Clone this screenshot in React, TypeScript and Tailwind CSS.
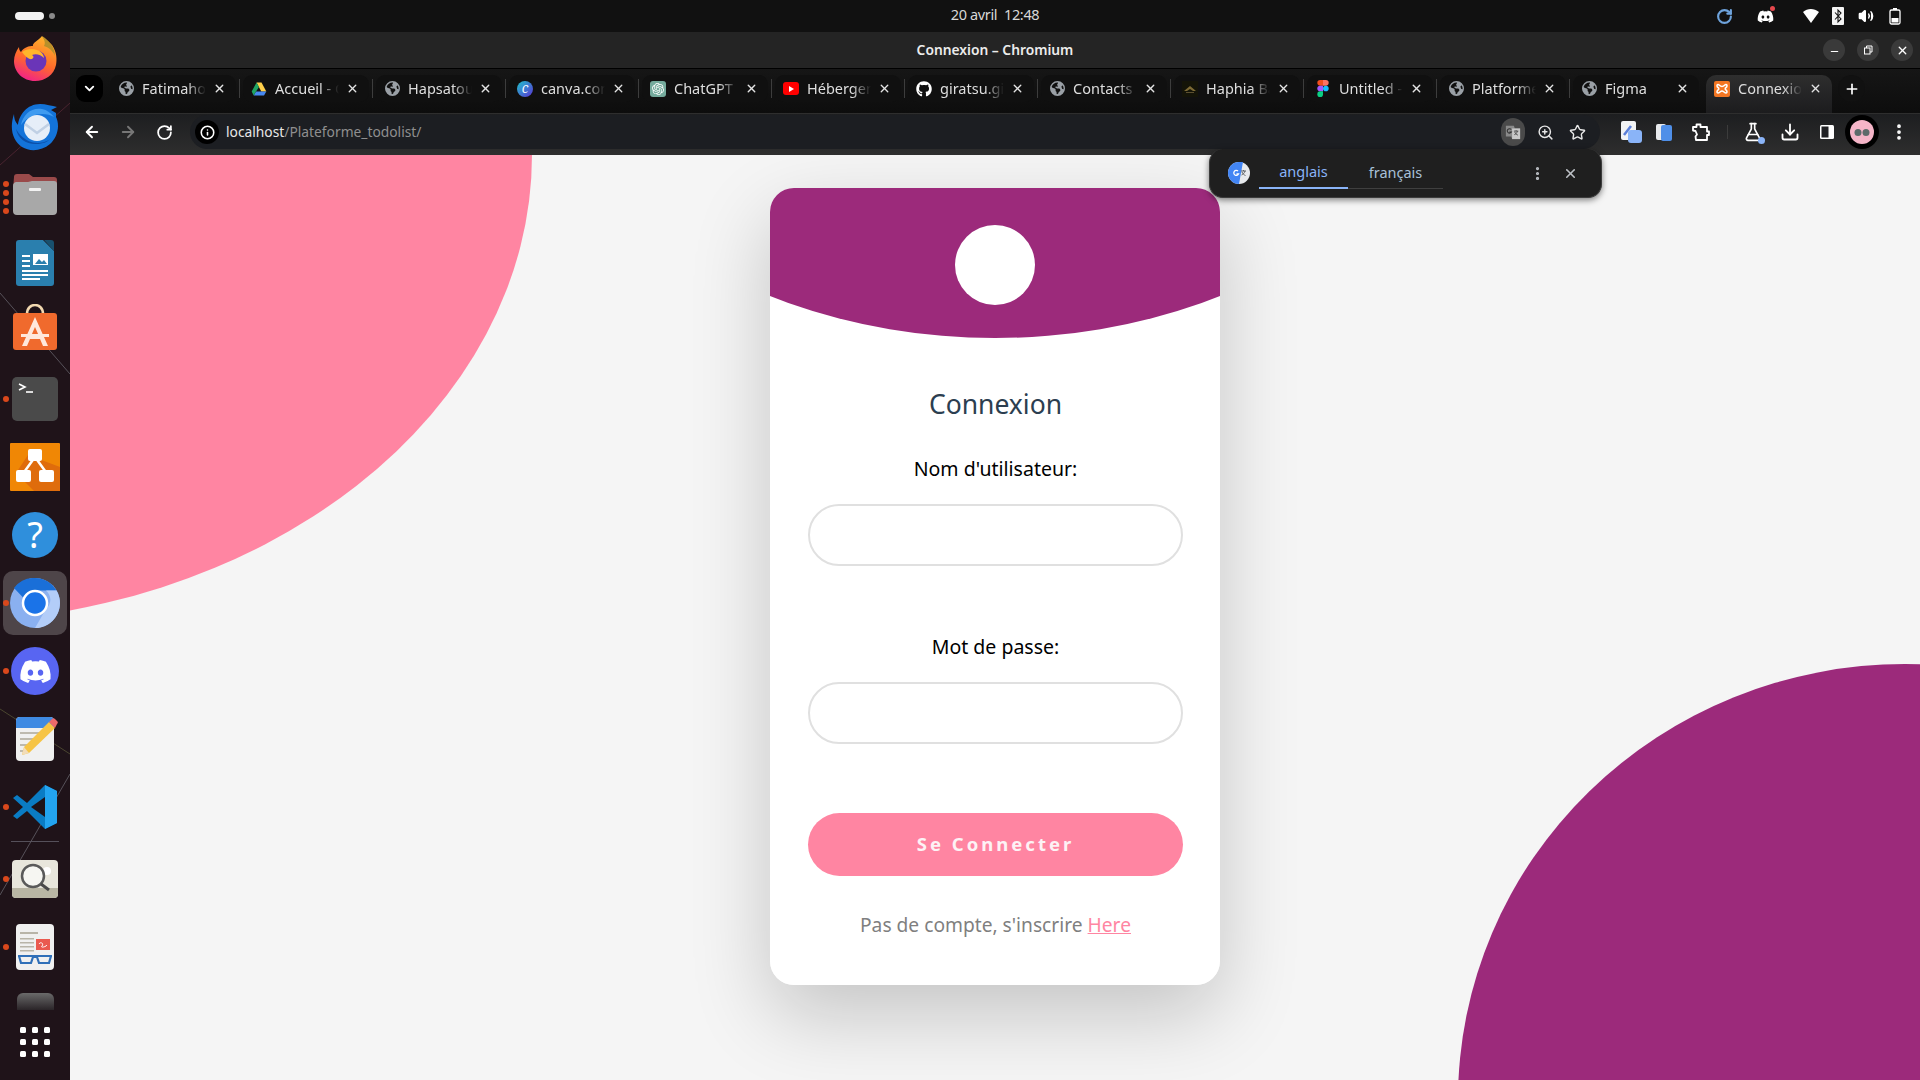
import type { ReactNode } from "react";
import {
  ArrowLeft,
  ArrowRight,
  ChevronDown,
  Download,
  EllipsisVertical,
  FlaskConical,
  Info,
  Minus,
  Plus,
  RotateCw,
  Star,
  Volume2,
  X,
  ZoomIn,
} from "lucide-react";
import { FaDiscord, FaEarthAmericas, FaGithub } from "react-icons/fa6";
import { SiOpenai } from "react-icons/si";

const Globe = () => <FaEarthAmericas size={15} className="text-[#9aa0a6]" />;

const DriveIcon = () => (
  <svg width="16" height="16" viewBox="0 0 16 16">
    <path d="M5.500 1.500h5l4.800 9h-5z" fill="#ffd04b" />
    <path d="M5 10.500h10.300L13 14.500H2.700z" fill="#4688f1" />
    <path d="M5.500 1.500 8 6 5 10.500 2.700 14.500 0.700 10.500z" fill="#1fa463" />
  </svg>
);

const CanvaIcon = () => (
  <span className="flex size-4 items-center justify-center rounded-full bg-[linear-gradient(135deg,#20c4cb,#5a32d6)] font-serif text-[12px] italic leading-none text-white">
    C
  </span>
);

const ChatGptIcon = () => (
  <span className="flex size-4 items-center justify-center rounded-[3px] bg-[#74aa9c]">
    <SiOpenai size={12} className="text-white" />
  </span>
);

const YoutubeIcon = () => (
  <span className="flex h-[13px] w-4 items-center justify-center rounded-[3px] bg-[#ff0000]">
    <span className="ml-px border-y-[3px] border-l-[5px] border-y-transparent border-l-white" />
  </span>
);

const HaphiaIcon = () => (
  <svg width="16" height="16" viewBox="0 0 16 16">
    <rect width="16" height="16" fill="#141408" />
    <path d="M2 10 8 5l6 5-3 0-3-2-3 2z" fill="#7d6a35" />
    <rect x="4" y="11" width="8" height="1" fill="#5c5030" />
  </svg>
);

const FigmaIcon = () => (
  <svg width="12" height="17" viewBox="0 0 12 18">
    <path d="M6 0H3a3 3 0 0 0 0 6h3z" fill="#f24e1e" />
    <path d="M6 0h3a3 3 0 0 1 0 6H6z" fill="#ff7262" />
    <path d="M6 6H3a3 3 0 0 0 0 6h3z" fill="#a259ff" />
    <circle cx="9" cy="9" r="3" fill="#1abcfe" />
    <path d="M6 12H3a3 3 0 1 0 3 3z" fill="#0acf83" />
  </svg>
);

const XamppIcon = () => (
  <svg width="16" height="16" viewBox="0 0 16 16">
    <rect width="16" height="16" rx="2" fill="#f37623" />
    <path
      d="M4 3.500c1.500 0 1.500 2 4 2s2.500-2 4-2 1 2.500 0 3-1 2 0 2.500 1.500 3 0 3-2.500-2-4-2-2.500 2-4 2-1-2.500 0-3 1-2 0-2.500-1.500-3 0-3z"
      fill="none"
      stroke="#fff"
      strokeWidth="1.600"
    />
  </svg>
);

type TabItem = { title: string; icon: ReactNode; active?: boolean };

const tabs: TabItem[] = [
  { title: "Fatimahou", icon: <Globe /> },
  { title: "Accueil - Google", icon: <DriveIcon /> },
  { title: "Hapsatou", icon: <Globe /> },
  { title: "canva.com", icon: <CanvaIcon /> },
  { title: "ChatGPT", icon: <ChatGptIcon /> },
  { title: "Hébergement", icon: <YoutubeIcon /> },
  { title: "giratsu.github", icon: <FaGithub size={16} className="text-white" /> },
  { title: "Contacts", icon: <Globe /> },
  { title: "Haphia Bah", icon: <HaphiaIcon /> },
  { title: "Untitled - Figma", icon: <FigmaIcon /> },
  { title: "Platforme", icon: <Globe /> },
  { title: "Figma", icon: <Globe /> },
  { title: "Connexion", icon: <XamppIcon />, active: true },
];

function Tab({ tab }: { tab: TabItem }) {
  return (
    <div
      className={`flex w-[126px] shrink-0 items-center pl-2 pr-[10px] ${
        tab.active
          ? "h-[38px] self-start rounded-t-[10px] bg-[linear-gradient(#2e2e2e,#1c1c1e)] pb-[11px]"
          : "h-[27px] rounded-[9px] bg-[#101010]"
      }`}
    >
      <span className="flex w-4 shrink-0 items-center justify-center">{tab.icon}</span>
      <span className="ml-2 -mt-[2px] w-[64px] shrink-0 overflow-hidden whitespace-nowrap text-[14.500px] leading-[20px] text-[#dedede] [mask-image:linear-gradient(to_right,black_70%,transparent)]">
        {tab.title}
      </span>
      <X size={13} strokeWidth={2.500} className="ml-auto shrink-0 text-[#e4e4e4]" />
    </div>
  );
}

function TabStrip() {
  return (
    <div className="flex h-[45px] shrink-0 border-t border-t-black bg-[linear-gradient(#161616,#0d0d0d)] pl-[6px] pt-[6px]">
      <div className="mr-[7px] flex h-[27px] w-[27px] shrink-0 items-center justify-center rounded-[9px] bg-black">
        <ChevronDown size={15} strokeWidth={3} className="text-white" />
      </div>
      {tabs.map((tab, i) => (
        <div key={tab.title} className="flex h-[27px] items-start">
          <Tab tab={tab} />
          {i < tabs.length - 1 && (
            <span
              className={`mx-[3px] mt-[4px] h-[19px] w-px shrink-0 ${
                i === tabs.length - 2 ? "bg-transparent" : "bg-[#3d3d3d]"
              }`}
            />
          )}
        </div>
      ))}
      <div className="ml-[6px] flex h-[27px] w-[27px] shrink-0 items-center justify-center rounded-full bg-[#111111]">
        <Plus size={16} strokeWidth={2.500} className="text-white" />
      </div>
    </div>
  );
}

function TranslateIcon({ size = 16 }: { size?: number }) {
  return (
    <svg width={size} height={size} viewBox="0 0 18 18">
      <path d="M1 2h9l1 3h6v12H8l-1-3H1z" fill="#8a8a8a" />
      <path d="M8 5h9v12H8z" fill="#c8c8c8" />
      <path d="M10 8h5M12.500 7v1M14 8c-.500 2-2 3.500-3.500 4M11 9c.500 1.500 2 3 3.500 3.500" stroke="#444" strokeWidth="1" fill="none" />
      <path d="M7 6.200A2.500 2.500 0 1 0 7.200 9H5" stroke="#333" strokeWidth="1.200" fill="none" />
    </svg>
  );
}

function ToolbarExtensions() {
  return (
    <div className="flex shrink-0 items-center">
      <svg width="24" height="24" viewBox="0 0 24 24" className="ml-[19px]">
        <rect x="2" y="1" width="15" height="19" rx="2" fill="#f1f3f4" />
        <path d="m5 15 7-9" stroke="#5b7fd8" strokeWidth="2.500" />
        <rect x="9" y="10" width="14" height="13" rx="3" fill="#8ab4f8" />
      </svg>
      <svg width="18" height="20" viewBox="0 0 18 20" className="ml-[12px]">
        <rect x="1" y="2" width="10" height="16" rx="2" fill="#e8eaed" />
        <rect x="6" y="3" width="11" height="16" rx="2" fill="#4f8fe8" />
      </svg>
      <svg width="20" height="20" viewBox="0 0 20 20" className="ml-[17px]" fill="none" stroke="#fff" strokeWidth="1.800">
        <path d="M3 5h3.500V2.500h4V5H17v4.500h2v3.500h-2V18H6l-.500-3.500L7 12.500 5.500 9 3 8.500z" strokeLinejoin="round" />
      </svg>
      <span className="ml-[17px] h-[14px] w-px bg-[#3c3c3c]" />
      <span className="relative ml-[15px] flex">
        <FlaskConical size={20} className="text-white" />
        <span className="absolute -bottom-[2px] -right-[2px] size-[7px] rounded-full bg-[#8ab4f8]" />
      </span>
      <Download size={20} strokeWidth={2.200} className="ml-[17px] text-white" />
      <svg width="16" height="16" viewBox="0 0 16 16" className="ml-[19px]">
        <rect x="1" y="1" width="14" height="14" rx="1.500" fill="#fff" />
        <rect x="2.500" y="2.500" width="7" height="11" fill="#202124" />
      </svg>
      <span className="ml-[10px] flex size-[34px] items-center justify-center rounded-full bg-black">
        <svg width="24" height="24" viewBox="0 0 24 24">
          <circle cx="12" cy="12" r="12" fill="#f5b5c8" />
          <circle cx="8" cy="12.500" r="3.500" fill="#5d6a6a" />
          <circle cx="16" cy="12.500" r="3.500" fill="#5d6a6a" />
        </svg>
      </span>
      <EllipsisVertical size={20} strokeWidth={2.500} className="ml-[10px] text-white" />
    </div>
  );
}

function Toolbar() {
  return (
    <div className="flex h-[42px] shrink-0 items-center border-t border-t-[#2e2e2e] bg-[linear-gradient(#1d1e20,#2e2e2e)] pb-[5px] pl-[13px]">
      <ArrowLeft size={18} strokeWidth={2.500} className="shrink-0 text-white" />
      <ArrowRight size={18} strokeWidth={2.500} className="ml-[18px] shrink-0 text-[#777777]" />
      <RotateCw size={17} strokeWidth={2.500} className="ml-[19px] shrink-0 text-white" />
      <div className="ml-[17px] flex h-[34px] w-[1410px] shrink-0 items-center rounded-full bg-[#1c1e22] pl-[5px] pr-[14px]">
        <span className="flex size-6 items-center justify-center rounded-full bg-black">
          <Info size={15} strokeWidth={2.500} className="text-white" />
        </span>
        <span className="ml-[7px] text-[13.800px] text-[#e8e8e8]">
          localhost<span className="text-[#8f8f8f]">/Plateforme_todolist/</span>
        </span>
        <span className="ml-auto flex h-[28px] w-[24px] items-center justify-center rounded-full bg-[#4a4a4a]">
          <TranslateIcon />
        </span>
        <ZoomIn size={17} strokeWidth={2} className="ml-[12px] text-[#e8e8e8]" />
        <Star size={17} strokeWidth={2} className="ml-[15px] text-[#e8e8e8]" />
      </div>
      <ToolbarExtensions />
    </div>
  );
}

function TopBar() {
  return (
    <div className="relative flex h-8 shrink-0 items-center justify-center bg-[#111111] pb-[2px] pl-[70px]">
      <div className="absolute left-[15px] top-[12px] flex items-center gap-[5px]">
        <span className="h-2 w-[29px] rounded-full bg-[#f2f2f2]" />
        <span className="size-[6px] rounded-full bg-[#8a8a8a]" />
      </div>
      <span className="text-[14.500px] tracking-tight text-[#d8d8d8]">20 avril&nbsp;&nbsp;12:48</span>
      <div className="absolute right-[19px] top-0 flex h-8 items-center">
        <RotateCw size={17} strokeWidth={3} className="text-[#6ea3dc]" />
        <span className="relative ml-[24px] flex">
          <FaDiscord size={17} className="text-white" />
          <span className="absolute -right-px -top-[2px] size-[5px] rounded-full bg-[#e5484d]" />
        </span>
        <svg width="16" height="14" viewBox="0 0 16 14" className="ml-[29px]">
          <path d="M0 3c4.500-4 11-4 16 0L8 14z" fill="#fff" />
        </svg>
        <svg width="12" height="18" viewBox="0 0 12 18" className="ml-[13px]">
          <rect width="12" height="18" rx="1" fill="#f4f4f4" />
          <path d="m3 5.500 6 6.500-3 3V3l3 3-6 6.500" fill="none" stroke="#111" strokeWidth="1.100" />
        </svg>
        <Volume2 size={16} className="ml-[14px] text-white" fill="#fff" />
        <svg width="12" height="17" viewBox="0 0 12 17" className="ml-[15px]">
          <rect x="4" width="4" height="2" fill="#fff" />
          <rect x="1" y="2" width="10" height="14" rx="1.500" fill="none" stroke="#fff" strokeWidth="1.300" />
          <rect x="2.500" y="10" width="7" height="4.500" fill="#fff" />
        </svg>
      </div>
    </div>
  );
}

function TitleBar() {
  return (
    <div className="relative flex h-[36px] shrink-0 items-center justify-center bg-[#242424]">
      <span className="text-[13.800px] font-semibold text-[#ececec]">Connexion – Chromium</span>
      <div className="absolute right-[7px] top-[7px] flex gap-[12px]">
        <span className="flex size-[22px] items-center justify-center rounded-full bg-[#3a3a3a]">
          <Minus size={11} strokeWidth={2.500} className="mt-[3px] text-white" />
        </span>
        <span className="flex size-[22px] items-center justify-center rounded-full bg-[#3a3a3a]">
          <svg width="10" height="10" viewBox="0 0 10 10" fill="none" stroke="#fff" strokeWidth="1">
            <rect x="1.500" y="3" width="5.500" height="6" />
            <path d="M3.500 3V1H9v6H7" />
          </svg>
        </span>
        <span className="flex size-[22px] items-center justify-center rounded-full bg-[#3a3a3a]">
          <X size={13} strokeWidth={2.500} className="text-white" />
        </span>
      </div>
    </div>
  );
}

function FirefoxIcon() {
  return (
    <svg width="46" height="46" viewBox="0 0 46 46">
      <defs>
        <linearGradient id="ff" x1="0.700" y1="0" x2="0.300" y2="1">
          <stop offset="0" stopColor="#ffb52b" />
          <stop offset="0.550" stopColor="#ff6a2b" />
          <stop offset="1" stopColor="#f0208a" />
        </linearGradient>
      </defs>
      <path d="M30 0c3 5 6 4 10 9 5 7 5 15 4 20-2 10-11 16-21 16C11 45 2 36 2 25c0-5 2-10 5-14 0 3 1 4 2 5 3-5 8-6 12-6-1-3 5-5 9-10z" fill="url(#ff)" />
      <path d="M30 0c5 3 13 10 13 20-3-7-8-9-11-10 2-3 0-7-2-10z" fill="#b8902a" />
      <circle cx="24" cy="25" r="10.500" fill="#6a35b8" />
      <path d="M10 16c4-3 10-4 15-2 4 1 7 5 7 8-3-3-8-5-12-3 2 1 2 3 0 4-3 1-7-3-10-7z" fill="#ffb52b" />
    </svg>
  );
}

function ThunderbirdIcon() {
  return (
    <svg width="50" height="48" viewBox="0 0 50 48">
      <path d="M46 14c4 8 2 20-6 27-8 7-20 8-28 3C3 38-1 26 4 11c0 4 1 8 4 11 1-10 9-21 22-21 6 0 12 2 17 3l-6 3 5 3z" fill="#1373d9" />
      <path d="M11 22C13 11 22 4 32 6c5 1 9 4 12 8C36 9 20 9 11 22z" fill="#3f9bf0" />
      <path d="M6 26c2 9 9 15 20 15 7 0 12-2 16-7-6 8-26 10-36-8z" fill="#0b4fa8" />
      <circle cx="27" cy="25" r="13" fill="#e6eef8" />
      <path d="m15 21 12 9 12-9" fill="none" stroke="#c0d0e4" strokeWidth="2.500" />
    </svg>
  );
}

function FilesIcon() {
  return (
    <svg width="46" height="42" viewBox="0 0 46 42">
      <path d="M2 3a3 3 0 0 1 3-3h12l4 3h21a3 3 0 0 1 3 3v10H1z" fill="#9a4a4a" />
      <path d="M1 12a4 4 0 0 1 3-4h12l4-1h22a3 3 0 0 1 3 3v27a4 4 0 0 1-4 4H5a4 4 0 0 1-4-4z" fill="#a8a8a8" />
      <rect x="17" y="14" width="12" height="3" rx="1" fill="#f2f2f2" />
    </svg>
  );
}

function WriterIcon() {
  return (
    <svg width="38" height="46" viewBox="0 0 38 46">
      <path d="M3 0h24l11 11v32a3 3 0 0 1-3 3H3a3 3 0 0 1-3-3V3a3 3 0 0 1 3-3z" fill="#2a7fae" />
      <path d="M28 0h7a3 3 0 0 1 3 3v8z" fill="#18506e" />
      <rect x="17" y="14" width="15" height="11" fill="#fff" />
      <path d="m19 24 4-5 3 3 2-2 3 4z" fill="#2a7fae" />
      <path d="M6 15h8v2H6zM6 20h8v2H6zM6 25h8v2H6zM6 30h26v2H6zM6 34h26v2H6zM6 38h18v2H6z" fill="#fff" />
    </svg>
  );
}

function AppStoreIcon() {
  return (
    <svg width="44" height="46" viewBox="0 0 44 46" className="-mt-[8px]">
      <path d="M14 10c0-12 16-12 16 0" fill="none" stroke="#f2d8b0" strokeWidth="2.500" />
      <rect y="9" width="44" height="37" rx="3" fill="#f06a2d" />
      <path d="m22 13-13 29h5l3-7h10l3 7h5L22 13zm0 10 3.500 8h-7z" fill="#ffe8dc" />
      <rect x="8" y="30" width="28" height="3" fill="#ffe8dc" />
    </svg>
  );
}

function TerminalIcon() {
  return (
    <svg width="46" height="44" viewBox="0 0 46 44">
      <rect width="46" height="44" rx="5" fill="#4a4a4a" />
      <path d="m7 7 6 3-6 3" fill="none" stroke="#fff" strokeWidth="1.600" />
      <path d="M14 15h7" stroke="#fff" strokeWidth="1.600" />
    </svg>
  );
}

function DrawioIcon() {
  return (
    <svg width="50" height="48" viewBox="0 0 50 48">
      <rect width="50" height="48" rx="1" fill="#f08705" />
      <path d="M18 12 50 24v24H24L6 30z" fill="#df6c0c" />
      <path d="M25 14 12 32M25 14l13 18" stroke="#fff" strokeWidth="2.500" />
      <rect x="18" y="6" width="14" height="12" rx="2" fill="#fff" />
      <rect x="6" y="27" width="15" height="12" rx="2" fill="#fff" />
      <rect x="29" y="27" width="15" height="12" rx="2" fill="#fff" />
    </svg>
  );
}

function HelpIcon() {
  return (
    <span className="flex size-[46px] items-center justify-center rounded-full bg-[#2f8fdc] text-[36px] leading-none text-white">
      ?
    </span>
  );
}

function ChromiumIcon() {
  return (
    <svg width="50" height="50" viewBox="0 0 50 50">
      <circle cx="25" cy="25" r="25" fill="#8ab0f0" />
      <path d="M25 0a25 25 0 0 1 21.600 12.500H25a12.500 12.500 0 0 0-11.500 7.500L4 10A25 25 0 0 1 25 0z" fill="#1a6fd8" />
      <path d="M46.600 12.500A25 25 0 0 1 25 50l11-19a12 12 0 0 0 0-18.500z" fill="#b3cdf8" />
      <circle cx="25" cy="25" r="12" fill="#1a73e8" stroke="#fff" strokeWidth="2.500" />
    </svg>
  );
}

function NotesIcon() {
  return (
    <svg width="46" height="46" viewBox="0 0 46 46">
      <rect x="4" y="1" width="38" height="44" rx="4" fill="#f0f0f0" />
      <path d="M4 12V5a4 4 0 0 1 4-4h30a4 4 0 0 1 4 4v7z" fill="#3f8ae2" />
      <path d="M8 16h28v2H8zM8 22h16v2H8zM8 28h12v2H8zM8 34h10v2H8z" fill="#bdb9ae" />
      <path d="M37 6 43 12 17 37l-7 2 2-8z" fill="#f6c445" />
      <path d="m37 6 3-3a2 2 0 0 1 3 0l2 2a2 2 0 0 1 0 3l-2 4z" fill="#ed6a6a" />
      <path d="m12 31-2 8 7-2z" fill="#f2dcb8" />
    </svg>
  );
}

function VscodeIcon() {
  return (
    <svg width="44" height="44" viewBox="0 0 44 44">
      <path d="M32 0 44 6v32l-12 6L14 26 4 34 0 31l10-9L0 13l4-3 10 8z" fill="#0a7cc4" />
      <path d="M32 0 44 6v32l-12 6z" fill="#23a4f0" />
      <path d="M32 12 18 22l14 10z" fill="#1e1319" />
    </svg>
  );
}

function LoupeIcon() {
  return (
    <svg width="46" height="38" viewBox="0 0 46 38">
      <rect width="46" height="38" rx="4" fill="#e8e6dc" />
      <path d="M0 28h46v6a4 4 0 0 1-4 4H4a4 4 0 0 1-4-4z" fill="#b9b6a4" />
      <circle cx="35" cy="11" r="4" fill="#fff" />
      <circle cx="21" cy="16" r="11" fill="#f6f6f2" stroke="#5a5a5a" strokeWidth="2.500" />
      <path d="m29 24 8 6" stroke="#4a4a4a" strokeWidth="3" />
    </svg>
  );
}

function ReaderIcon() {
  return (
    <svg width="38" height="46" viewBox="0 0 38 46">
      <rect width="38" height="46" rx="4" fill="#f0f0f0" />
      <path d="M4 8h18v2H4zM4 14h14v1.500H4zM4 18h14v1.500H4zM4 22h14v1.500H4zM4 26h14v1.500H4z" fill="#b8b4a8" />
      <rect x="20" y="15" width="14" height="11" fill="#ea5a50" />
      <path d="M23 20c2-3 5 0 3 2s4 1 5-1" stroke="#fff" fill="none" strokeWidth="1" />
      <path d="M2 32h34M3 32l2 7h10l2-6h4l2 6h10l2-7" fill="none" stroke="#2f6fb8" strokeWidth="2.200" />
    </svg>
  );
}

type DockApp = { icon: ReactNode; dot?: boolean; active?: boolean; manyDots?: boolean };

const dockApps: DockApp[] = [
  { icon: <FirefoxIcon /> },
  { icon: <ThunderbirdIcon /> },
  { icon: <FilesIcon />, manyDots: true },
  { icon: <WriterIcon /> },
  { icon: <AppStoreIcon /> },
  { icon: <TerminalIcon />, dot: true },
  { icon: <DrawioIcon /> },
  { icon: <HelpIcon /> },
  { icon: <ChromiumIcon />, dot: true, active: true },
  {
    icon: (
      <span className="flex size-12 items-center justify-center rounded-full bg-[#5865f2]">
        <FaDiscord size={33} className="text-white" />
      </span>
    ),
    dot: true,
  },
  { icon: <NotesIcon /> },
  { icon: <VscodeIcon />, dot: true },
];

function DockItem({ app }: { app: DockApp }) {
  return (
    <div className="relative flex h-[68px] w-[70px] shrink-0 items-center justify-center">
      {app.active && <span className="absolute inset-x-[3px] inset-y-[2px] rounded-[10px] bg-[#4e4549]" />}
      {app.dot && <span className="absolute left-[3px] top-[31px] size-[6px] rounded-full bg-[#d9481c]" />}
      {app.manyDots && (
        <span className="absolute left-[3px] top-[20px] flex flex-col gap-[3px]">
          {[0, 1, 2, 3].map((d) => (
            <span key={d} className="size-[6px] rounded-full bg-[#d9481c]" />
          ))}
        </span>
      )}
      <span className="relative flex">{app.icon}</span>
    </div>
  );
}

function Dock() {
  return (
    <aside className="relative z-10 flex w-[70px] shrink-0 flex-col overflow-hidden bg-[#1f1319]">
      <svg width="70" height="1048" viewBox="0 32 70 1048" className="absolute left-0 top-0">
        <path d="M0 165 70 103" stroke="#4a2430" strokeWidth="1" />
        <path d="M0 293 70 374" stroke="#57525a" strokeWidth="1" />
        <path d="M0 709 70 754" stroke="#4a4630" strokeWidth="1" />
        <path d="M0 895 70 774" stroke="#57525a" strokeWidth="1" />
      </svg>
      <div className="relative -mt-[7px] flex flex-col">
        {dockApps.map((app, i) => (
          <DockItem key={i} app={app} />
        ))}
        <span className="mx-[11px] h-[1px] shrink-0 bg-[#55505a]" />
        <span className="h-[3px] shrink-0" />
        <DockItem app={{ icon: <LoupeIcon />, dot: true }} />
        <DockItem app={{ icon: <ReaderIcon />, dot: true }} />
        <span className="mx-auto mt-[12px] h-[17px] w-[37px] shrink-0 rounded-t-[6px] bg-[linear-gradient(#6a6a6a,#2a2428)]" />
        <div className="mx-auto mt-[17px] grid grid-cols-3 gap-x-[6px] gap-y-[6px]">
          {Array.from({ length: 9 }).map((_, i) => (
            <span key={i} className="size-[6px] rounded-[1.500px] bg-white" />
          ))}
        </div>
      </div>
    </aside>
  );
}

function LoginCard() {
  return (
    <div className="relative mt-[33px] h-[797px] w-[450px] overflow-hidden rounded-[24px] bg-white">
      <div className="relative flex h-[150px] justify-center">
        <div className="absolute -left-[315px] -top-[772px] h-[922px] w-[1080px] rounded-[50%] bg-[#9c2a7b]" />
        <div className="relative mt-[37px] size-20 rounded-full bg-white" />
      </div>
      <form className="flex flex-col pl-[38px] pr-[37px] text-center">
        <h1 className="mt-[46px] text-[26.500px] leading-[40px] text-[#2c3e50]">Connexion</h1>
        <label className="mt-[31px] text-[19.500px] leading-[28px] text-black">Nom d'utilisateur:</label>
        <input type="text" className="mt-[21px] h-[62px] w-full rounded-full border-2 border-[#e0e0e0] bg-white" />
        <label className="mt-[67px] text-[19.500px] leading-[28px] text-black">Mot de passe:</label>
        <input type="password" className="mt-[21px] h-[62px] w-full rounded-full border-2 border-[#e0e0e0] bg-white" />
        <button type="button" className="mt-[69px] h-[63px] w-full rounded-full bg-[#ff85a2] pb-[1px] text-[18.500px] font-bold tracking-[3px] text-[#fdf2f5]">
          Se Connecter
        </button>
        <p className="mt-[35px] text-[19.200px] leading-[28px] text-[#7f7f7f]">
          Pas de compte, s'inscrire <a href="#" className="text-[#ff85a2] underline">Here</a>
        </p>
      </form>
    </div>
  );
}

function TranslateBubble() {
  return (
    <div className="absolute left-[1209px] top-[149px] z-20 flex h-[49px] w-[393px] items-center rounded-[14px] border border-t-0 border-[#3c3c3c] bg-[#1f1f1f] shadow-[0_2px_6px_rgba(0,0,0,0.5)]">
      <svg width="22" height="22" viewBox="0 0 22 22" className="ml-[18px]">
        <circle cx="11" cy="11" r="11" fill="#e8eaed" />
        <path d="M11 0a11 11 0 0 0 0 22l4-22z" fill="#4285f4" />
        <path d="M10 9a2.500 2.500 0 1 0 .5 3H8.500" stroke="#fff" fill="none" strokeWidth="1.300" />
        <path d="M13 9h5M15.500 8v1M17 9c-.500 2-2 3.500-3.500 4M14 10c.500 1.500 2 3 3.500 3.500" stroke="#5f6368" fill="none" strokeWidth="1" />
      </svg>
      <div className="ml-[9px] flex h-[40px] self-start items-stretch pt-[8px] text-[14.500px]">
        <span className="flex w-[89px] items-center justify-center border-b-2 border-[#8ab4f8] text-[#8ab4f8]">anglais</span>
        <span className="flex w-[95px] items-center justify-center border-b border-[#3f3f3f] text-[#a8c0d8]">français</span>
      </div>
      <EllipsisVertical size={17} strokeWidth={2.500} className="ml-[86px] text-[#bdc1c6]" />
      <X size={15} strokeWidth={2.500} className="ml-[17px] text-[#bdc1c6]" />
    </div>
  );
}

export default function App() {
  return (
    <div className="relative flex h-screen w-screen flex-col overflow-hidden font-['Noto_Sans',sans-serif]">
      <TopBar />
      <div className="flex min-h-0 flex-1">
        <Dock />
        <div className="flex min-w-0 flex-1 flex-col">
          <TitleBar />
          <TabStrip />
          <Toolbar />
          <main className="relative flex flex-1 justify-center overflow-hidden bg-[#f5f5f5]">
            <div className="absolute -left-[738px] -top-[468px] h-[936px] w-[1200px] rounded-[50%] bg-[#ff85a2]" />
            <div className="absolute left-[1388px] top-[509px] h-[872px] w-[894px] rounded-[50%] bg-[#9c2a7b]" />
            <div className="absolute left-[700px] top-[33px] h-[797px] w-[450px] rounded-[24px] shadow-[0_30px_80px_rgba(0,0,0,0.2)]" />
            <LoginCard />
          </main>
        </div>
      </div>
      <TranslateBubble />
    </div>
  );
}
